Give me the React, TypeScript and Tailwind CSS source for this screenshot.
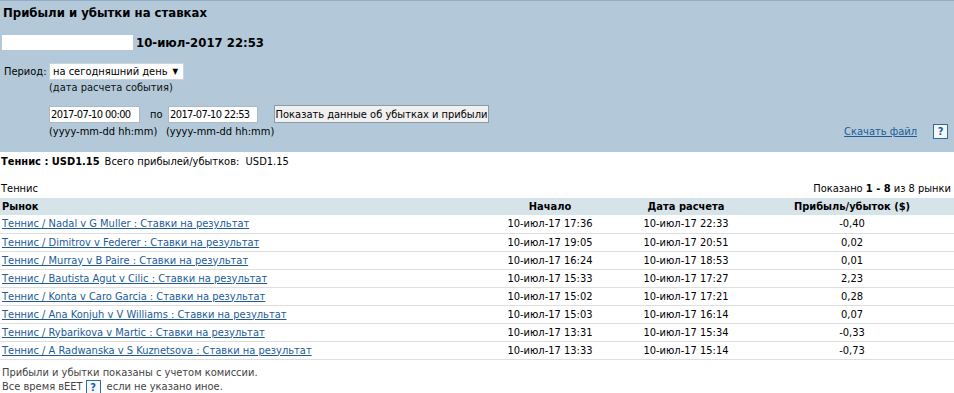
const ROWS = [
  { market: 'Теннис / Nadal v G Muller : Ставки на результат', start: '10-июл-17 17:36', settled: '10-июл-17 22:33', pl: '-0,40' },
  { market: 'Теннис / Dimitrov v Federer : Ставки на результат', start: '10-июл-17 19:05', settled: '10-июл-17 20:51', pl: '0,02' },
  { market: 'Теннис / Murray v B Paire : Ставки на результат', start: '10-июл-17 16:24', settled: '10-июл-17 18:53', pl: '0,01' },
  { market: 'Теннис / Bautista Agut v Cilic : Ставки на результат', start: '10-июл-17 15:33', settled: '10-июл-17 17:27', pl: '2,23' },
  { market: 'Теннис / Konta v Caro Garcia : Ставки на результат', start: '10-июл-17 15:02', settled: '10-июл-17 17:21', pl: '0,28' },
  { market: 'Теннис / Ana Konjuh v V Williams : Ставки на результат', start: '10-июл-17 15:03', settled: '10-июл-17 16:14', pl: '0,07' },
  { market: 'Теннис / Rybarikova v Martic : Ставки на результат', start: '10-июл-17 13:31', settled: '10-июл-17 15:34', pl: '-0,33' },
  { market: 'Теннис / A Radwanska v S Kuznetsova : Ставки на результат', start: '10-июл-17 13:33', settled: '10-июл-17 15:14', pl: '-0,73' },
];

function HelpBox() {
  return (
    <span className="inline-flex h-[15px] w-[15px] items-center justify-center border border-[#2f6aa3] bg-[#f4f8fb] text-[11px] font-bold leading-none text-[#1d5c99]">
      ?
    </span>
  );
}

export default function App() {
  return (
    <div className="w-[954px] h-[393px] bg-white font-['DejaVu_Sans_Condensed','DejaVu_Sans',sans-serif] text-[11px] leading-[13px] text-black overflow-hidden">
      {/* Header panel */}
      <div className="h-[152px] bg-[#b3c9d9] border-t border-[#93aec2] px-[3px]">
        <h1 className="mt-[4px] text-[13px] leading-[16px] font-bold">Прибыли и убытки на ставках</h1>

        <div className="mt-[14px] flex items-center h-[15px]">
          <div className="ml-[-1px] w-[131px] h-[15px] bg-white" />
          <span className="ml-[3px] text-[13px] font-bold">10-июл-2017 22:53</span>
        </div>

        <div className="mt-[13px] flex items-center">
          <span className="ml-[1px] w-[45px]">Период:</span>
          <div className="flex h-[17px] w-[135px] items-center justify-between border border-[#c9d3da] bg-white pl-[3px] pr-[5px]">
            <span>на сегодняшний день</span>
            <span className="text-[8px]">▼</span>
          </div>
        </div>
        <div className="ml-[46px] mt-[1px] text-[#111]">(дата расчета события)</div>

        <div className="mt-[11px] ml-[46px] flex items-center">
          <div className="flex h-[17px] w-[91px] items-center overflow-hidden whitespace-nowrap border border-[#aeb9c2] bg-white pl-[1px] tracking-[-0.6px]">
            2017-07-10 00:00
          </div>
          <span className="ml-[10px] w-[18px]">по</span>
          <div className="flex h-[17px] w-[90px] items-center overflow-hidden whitespace-nowrap border border-[#aeb9c2] bg-white pl-[1px] tracking-[-0.6px]">
            2017-07-10 22:53
          </div>
          <div className="ml-[16px] flex h-[18px] w-[215px] items-center justify-center whitespace-nowrap border border-[#8e9aa4] bg-[#f0f0f0]">
            Показать данные об убытках и прибыли
          </div>
        </div>

        <div className="mt-[1px] ml-[46px] flex items-center">
          <span className="w-[117px]">(yyyy-mm-dd hh:mm)</span>
          <span>(yyyy-mm-dd hh:mm)</span>
          <span className="ml-auto mr-[3px] flex items-center gap-[16px]">
            <a className="text-[#1d5b98] underline">Скачать файл</a>
            <HelpBox />
          </span>
        </div>
      </div>

      {/* Summary */}
      <div className="mt-[3px] px-[1px]">
        <b>Теннис : USD1.15</b>
        <span className="ml-[5px]">Всего прибылей/убытков:&nbsp; USD1.15</span>
      </div>

      <div className="mt-[14px] flex justify-between px-[1px]">
        <span>Теннис</span>
        <span className="mr-[2px]">
          Показано <b>1 - 8</b> из 8 рынки
        </span>
      </div>

      {/* Markets table */}
      <table className="mt-[3px] w-full border-collapse">
        <thead>
          <tr className="h-[17px] bg-[#d6e4ea] font-bold">
            <th className="w-[478px] pl-[2px] text-left">Рынок</th>
            <th className="w-[144px] text-center">Начало</th>
            <th className="w-[128px] text-center">Дата расчета</th>
            <th className="text-center">Прибыль/убыток ($)</th>
          </tr>
        </thead>
        <tbody>
          {ROWS.map((r) => (
            <tr key={r.market} className="h-[18px] border-b border-[#dedede]">
              <td className="pl-[2px]">
                <a className="text-[#1d5b98] underline">{r.market}</a>
              </td>
              <td className="text-center">{r.start}</td>
              <td className="text-center">{r.settled}</td>
              <td className="text-center">{r.pl}</td>
            </tr>
          ))}
        </tbody>
      </table>

      <div className="mt-[6px] px-[2px] text-[#444] leading-[14px]">
        <div>Прибыли и убытки показаны с учетом комиссии.</div>
        <div className="flex items-center">
          <span>Все время вEET</span>
          <span className="ml-[3px] mr-[6px]">
            <HelpBox />
          </span>
          <span>если не указано иное.</span>
        </div>
      </div>
    </div>
  );
}
